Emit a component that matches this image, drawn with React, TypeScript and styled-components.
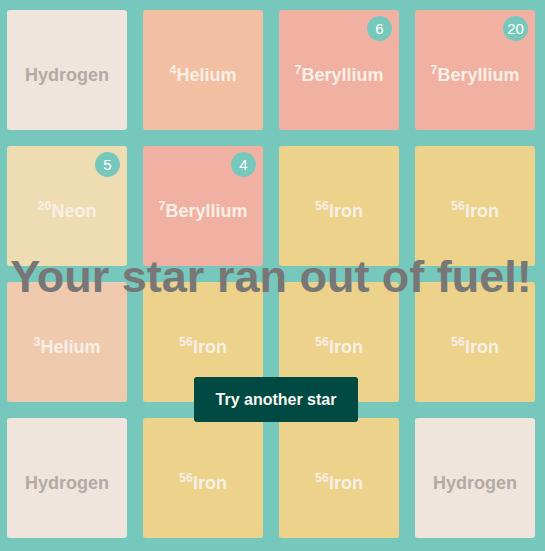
import React from "react";
import styled, { createGlobalStyle } from "styled-components";

const Global = createGlobalStyle`
  html, body { margin: 0; padding: 0; background: #77c8bc; }
  body { font-family: "Liberation Sans", Arial, sans-serif; }
`;

const Page = styled.div`
  width: 545px;
  height: 551px;
  padding: 10px 0 0 7px;
  box-sizing: border-box;
`;

const Board = styled.div`
  position: relative;
  width: 528px;
  height: 528px;
`;

const Grid = styled.div`
  display: grid;
  grid-template-columns: repeat(4, 120px);
  grid-auto-rows: 120px;
  gap: 16px;
`;

type Kind = "h" | "he4" | "he3" | "be" | "ne" | "fe";

const colors: Record<Kind, { bg: string; fg: string }> = {
  h: { bg: "#efe5dc", fg: "#b3aaa5" },
  he4: { bg: "#f2bfa3", fg: "#f8efe6" },
  he3: { bg: "#f0caaf", fg: "#f8efe6" },
  be: { bg: "#f0b1a2", fg: "#f8efe6" },
  ne: { bg: "#eedcb3", fg: "#f8efe6" },
  fe: { bg: "#ecd28a", fg: "#f8efe6" },
};

const Tile = styled.div<{ $kind: Kind }>`
  position: relative;
  border-radius: 3px;
  background: ${(p) => colors[p.$kind].bg};
  color: ${(p) => colors[p.$kind].fg};
  display: flex;
  align-items: center;
  justify-content: center;
  padding-top: 10px;
  box-sizing: border-box;
  font-weight: bold;
  font-size: 18px;
`;

const Label = styled.span`
  white-space: nowrap;
`;

const Sup = styled.sup`
  font-size: 12.5px;
  vertical-align: 7px;
  line-height: 0;
`;

const Badge = styled.div`
  position: absolute;
  top: 6px;
  right: 7px;
  width: 25px;
  height: 25px;
  border-radius: 50%;
  background: #77c8bc;
  color: #ffffff;
  font-weight: normal;
  font-size: 15px;
  display: flex;
  align-items: center;
  justify-content: center;
`;

const Overlay = styled.div`
  position: absolute;
  inset: 0;
  display: flex;
  flex-direction: column;
  align-items: center;
`;

const Title = styled.h1`
  margin: 242px 0 0 0;
  font-size: 45px;
  line-height: 50px;
  font-weight: bold;
  color: #777777;
  white-space: nowrap;
`;

const Button = styled.button`
  margin: 75px 0 0 10px;
  height: 45px;
  padding: 0 22px;
  border: none;
  border-radius: 3px;
  background: #004a43;
  color: #f9f6f2;
  font-family: "Liberation Sans", Arial, sans-serif;
  font-weight: bold;
  font-size: 16px;
  line-height: 45px;
  cursor: pointer;
`;

type Cell = { kind: Kind; name: string; mass?: string; badge?: string };

const H: Cell = { kind: "h", name: "Hydrogen" };
const Fe: Cell = { kind: "fe", name: "Iron", mass: "56" };

const cells: Cell[] = [
  H,
  { kind: "he4", name: "Helium", mass: "4" },
  { kind: "be", name: "Beryllium", mass: "7", badge: "6" },
  { kind: "be", name: "Beryllium", mass: "7", badge: "20" },
  { kind: "ne", name: "Neon", mass: "20", badge: "5" },
  { kind: "be", name: "Beryllium", mass: "7", badge: "4" },
  Fe,
  Fe,
  { kind: "he3", name: "Helium", mass: "3" },
  Fe,
  Fe,
  Fe,
  H,
  Fe,
  Fe,
  H,
];

export default function App() {
  return (
    <Page>
      <Global />
      <Board>
        <Grid>
          {cells.map((c, i) => (
            <Tile key={i} $kind={c.kind}>
              <Label>
                {c.mass && <Sup>{c.mass}</Sup>}
                {c.name}
              </Label>
              {c.badge && <Badge>{c.badge}</Badge>}
            </Tile>
          ))}
        </Grid>
        <Overlay>
          <Title>Your star ran out of fuel!</Title>
          <Button>Try another star</Button>
        </Overlay>
      </Board>
    </Page>
  );
}
